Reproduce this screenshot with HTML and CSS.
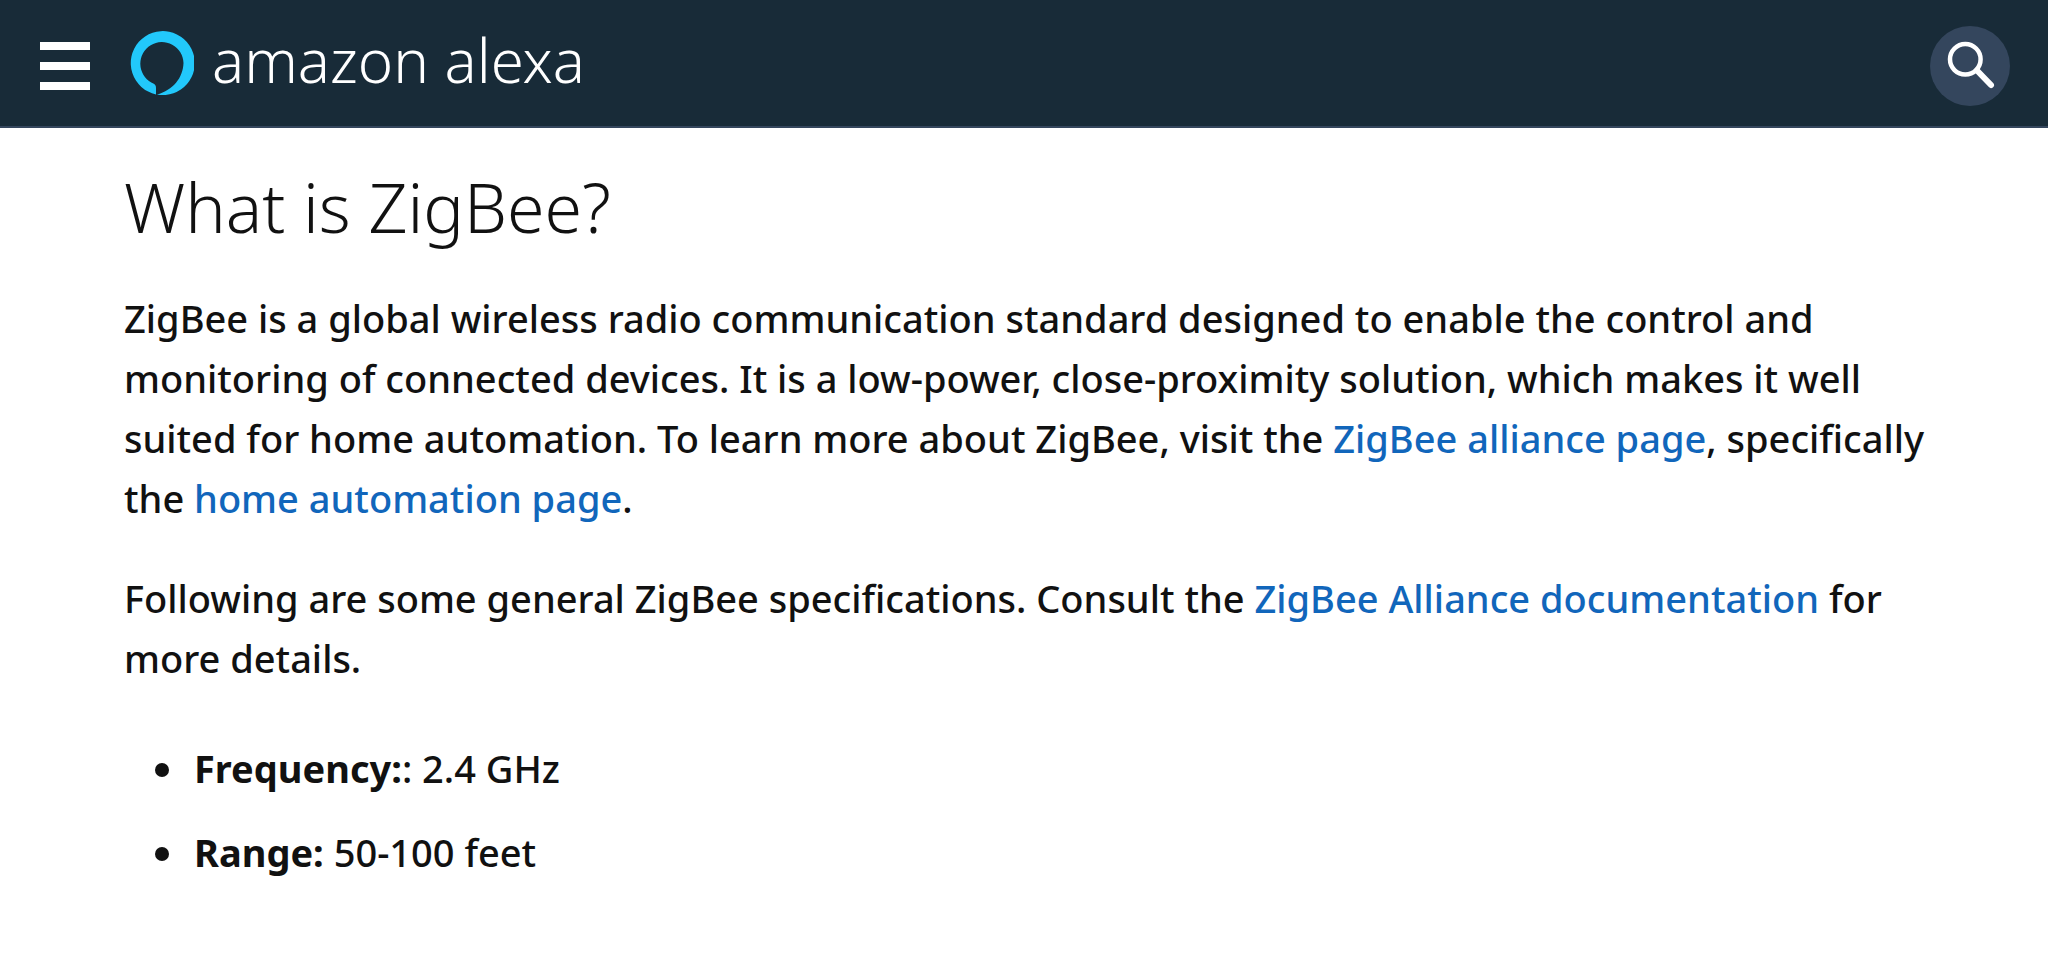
FILE: index.html
```html
<!DOCTYPE html>
<html lang="en">
<head>
<meta charset="utf-8">
<meta name="viewport" content="width=device-width, initial-scale=1">
<title>What is ZigBee?</title>
<link rel="stylesheet" href="styles.css">
</head>
<body>
<header class="topbar">
  <button class="menu" type="button" aria-label="Menu"><span></span><span></span><span></span></button>
  <a class="brand" href="#">
    <svg class="ring" viewBox="0 0 64 64" aria-hidden="true"><path fill="#22c8fb" d="M26 63.400V57C26 54.600 25.200 53.600 23.300 52.600L21.300 51.500A21.600 21.600 0 1 1 53.500 32C53 47 43 59 27 63.600A32 32 0 1 0 26 63.400Z"/></svg>
    <span class="wordmark">amazon alexa</span>
  </a>
  <button class="search" type="button" aria-label="Search">
    <svg viewBox="0 0 80 80" aria-hidden="true"><circle cx="35.300" cy="33.300" r="15.300" fill="none" stroke="#fff" stroke-width="4.500"/><path d="M47 44.500L61 59" stroke="#fff" stroke-width="6" stroke-linecap="round"/></svg>
  </button>
</header>
<main class="content">
  <h1>What is ZigBee?</h1>
  <p>ZigBee is a global wireless radio communication standard designed to enable the control and monitoring of connected devices. It is a low-power, close-proximity solution, which makes it well suited for home automation. To learn more about ZigBee, visit the <a href="#">ZigBee alliance page</a>, specifically the <a href="#">home automation page</a>.</p>
  <p>Following are some general ZigBee specifications. Consult the <a href="#">ZigBee Alliance documentation</a> for more details.</p>
  <ul>
    <li><strong>Frequency:</strong>: 2.4 GHz</li>
    <li><strong>Range:</strong> 50-100 feet</li>
  </ul>
</main>
</body>
</html>
```
FILE: styles.css
```css
* { box-sizing: border-box; }
body {
  margin: 0;
  background: #fff;
  color: #111;
  font-family: "Noto Sans", sans-serif;
  font-size: 38px;
  font-weight: 500;
  line-height: 60px;
}
a { color: #1166bb; text-decoration: none; }
strong { font-weight: 700; }
.topbar {
  display: flex;
  align-items: center;
  height: 128px;
  padding: 0 38px 0 40px;
  background: #182b38;
  border-bottom: 2px solid #34465d;
}
.menu, .search { border: 0; padding: 0; margin-top: 6px; background: none; }
.menu { display: grid; gap: 12px; width: 50px; margin-right: 40px; }
.menu span { height: 8px; background: #fff; }
.brand { display: flex; align-items: center; gap: 18px; color: #fff; }
.ring { width: 64px; height: 64px; }
.wordmark { padding-bottom: 6px; font-size: 60px; font-weight: 300; }
.search { margin-left: auto; width: 80px; height: 80px; border-radius: 50%; background: #34465d; }
.search svg { display: block; width: 80px; height: 80px; }
.content { padding: 38px 120px 40px 124px; }
h1 { margin: 0; font-size: 68px; line-height: 82px; font-weight: 300; }
p { margin: 40px 0 0; }
ul { margin: 50px 0 0; padding-left: 65px; }
li { margin-bottom: 24px; padding-left: 5px; }
```
